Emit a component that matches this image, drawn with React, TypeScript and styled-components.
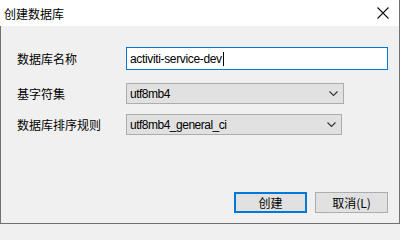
import React from 'react'
import styled, { createGlobalStyle } from 'styled-components'

const Global = createGlobalStyle`
  html, body { margin: 0; padding: 0; background: #f0f0f0; }
  * { box-sizing: border-box; }
  body {
    font-family: "Liberation Sans", "Noto Sans CJK SC", sans-serif;
    font-size: 12px;
    color: #000;
  }
`

const Window = styled.div`
  width: 400px;
  height: 224px;
  display: flex;
  flex-direction: column;
  background: #f0f0f0;
`

const TitleBar = styled.div`
  height: 26px;
  flex: none;
  background: #fff;
  display: flex;
  align-items: center;
  padding: 0 10px 0 4px;
  border-right: 1px solid #707070;
`

const Title = styled.div`
  flex-grow: 1;
  font-family: "Noto Sans CJK SC", sans-serif;
  font-size: 12px;
  line-height: 14px;
  padding-top: 1px;
`

const CloseIcon = () => (
  <svg width="12" height="12" viewBox="0 0 12 12">
    <path d="M0.5 0.5 L11.5 11.5 M11.5 0.5 L0.5 11.5" stroke="#111" strokeWidth="1.1" fill="none" />
  </svg>
)

const Body = styled.div`
  flex: 1;
  display: flex;
  flex-direction: column;
  border: 1px solid #707070;
  border-top: none;
  padding: 21px 11px 10px 16px;
`

const Row = styled.div<{ top?: number }>`
  display: flex;
  align-items: center;
  margin-top: ${p => p.top || 0}px;
`

const Label = styled.div`
  width: 109px;
  flex: none;
  font-family: "Noto Sans CJK SC", sans-serif;
  font-size: 12px;
`

const TextBox = styled.div`
  width: 264px;
  height: 23px;
  background: #fff;
  border: 1px solid #0078d7;
  display: flex;
  align-items: center;
  padding-left: 3px;
  font-size: 12px;
  letter-spacing: -0.35px;
`

const Caret = styled.span`
  display: inline-block;
  width: 1px;
  height: 14px;
  background: #000;
  margin-left: 1px;
`

const Select = styled.div<{ w: number }>`
  width: ${p => p.w}px;
  height: 21px;
  background: #e1e1e1;
  border: 1px solid #adadad;
  display: flex;
  align-items: center;
  padding: 0 5px 0 3px;
  font-size: 12px;
  letter-spacing: -0.5px;
`

const SelectText = styled.div`flex-grow: 1;`

const Chevron = () => (
  <svg width="9" height="5" viewBox="0 0 9 5">
    <path d="M0.5 0.5 L4.5 4.5 L8.5 0.5" stroke="#333" strokeWidth="1.1" fill="none" />
  </svg>
)

const Footer = styled.div`
  margin-top: auto;
  display: flex;
  justify-content: flex-end;
  gap: 8px;
`

const Button = styled.div<{ primary?: boolean }>`
  width: 73px;
  height: 21px;
  background: #e1e1e1;
  border: ${p => (p.primary ? '2px solid #0078d7' : '1px solid #adadad')};
  display: flex;
  align-items: center;
  justify-content: center;
  font-family: "Noto Sans CJK SC", sans-serif;
  font-size: 12px;
`

const App = () => (
  <Window>
    <Global />
    <TitleBar>
      <Title>创建数据库</Title>
      <CloseIcon />
    </TitleBar>
    <Body>
      <Row>
        <Label>数据库名称</Label>
        <TextBox>activiti-service-dev<Caret /></TextBox>
      </Row>
      <Row top={13}>
        <Label>基字符集</Label>
        <Select w={218}>
          <SelectText>utf8mb4</SelectText>
          <Chevron />
        </Select>
      </Row>
      <Row top={10}>
        <Label>数据库排序规则</Label>
        <Select w={216}>
          <SelectText>utf8mb4_general_ci</SelectText>
          <Chevron />
        </Select>
      </Row>
      <Footer>
        <Button primary>创建</Button>
        <Button>取消(L)</Button>
      </Footer>
    </Body>
  </Window>
)

export default App
